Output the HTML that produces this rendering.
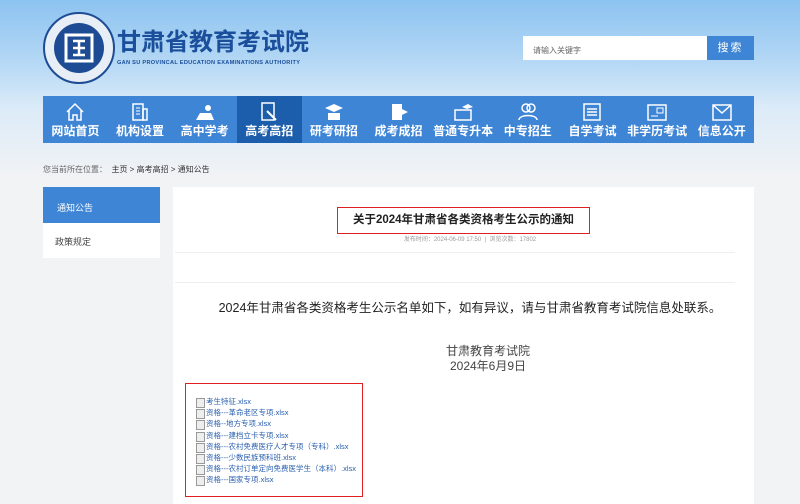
<!DOCTYPE html>
<html><head><meta charset="utf-8"><style>
*{margin:0;padding:0;box-sizing:border-box}
body{width:800px;height:504px;overflow:hidden;font-family:"Liberation Sans","Noto Sans CJK SC",sans-serif;background:#f2f3f5;position:relative}
.hdr{position:absolute;left:0;top:0;width:800px;height:180px;background:linear-gradient(180deg,#8cc3f0 0%,#b5d8f5 35%,#dcebf8 60%,#f2f3f5 100%)}
.abs{position:absolute}
.nav{left:43px;top:96px;width:711px;height:47px;background:#3f85d6;display:flex}
.nav div{flex:1;color:#fff;font-weight:bold;font-size:12px;text-align:center;padding-top:26px;position:relative}
.nav div.on{background:#1c5eab}
.nav svg{position:absolute;left:50%;top:5px;margin-left:-11px}
.side{left:43px;top:187px;width:117px;height:71px;background:#fff}
.content{left:173px;top:187px;width:581px;height:317px;background:#fff}
.files div{font-size:7.5px;color:#2a5fb0;height:11.2px;line-height:11.2px;padding-left:12px;position:relative}
.files div:before{content:"";position:absolute;left:2px;top:2px;width:7px;height:8px;border:1px solid #999;background:#eee}
</style></head><body>
<div class="hdr"></div>
<svg class="abs" style="left:43px;top:12px" width="72" height="72" viewBox="0 0 72 72">
<circle cx="36" cy="36" r="35" fill="#e8eef6" stroke="#1d4c95" stroke-width="2"/>
<circle cx="36" cy="36" r="25" fill="#1d4c95"/>
<rect x="23" y="23" width="26" height="26" fill="none" stroke="#fff" stroke-width="3"/>
<path d="M30 29h12M30 43h12M36 29v14M30 36h12" stroke="#fff" stroke-width="2.5" fill="none"/>
</svg>
<div class="abs" style="left:117px;top:29px;font-size:24px;font-weight:bold;color:#1b4f9c;line-height:28px">甘肃省教育考试院</div>
<div class="abs" style="left:117px;top:60px;font-size:5.6px;font-weight:bold;color:#1b4f9c;letter-spacing:0.3px">GAN SU PROVINCAL EDUCATION EXAMINATIONS AUTHORITY</div>
<div class="abs" style="left:523px;top:36px;width:184px;height:24px;background:#fff;font-size:8px;color:#666;padding:9px 0 0 10px">请输入关键字</div>
<div class="abs" style="left:707px;top:36px;width:47px;height:24px;background:#3f85d6;color:#fff;font-size:11px;text-align:center;line-height:24px;letter-spacing:2px">搜索</div>
<div class="abs nav">
<div><svg width="22" height="22"><path d="M3 11L11 3l8 8M5 9v10h4v-5h4v5h4V9" fill="none" stroke="#fff" stroke-width="1.5"/></svg>网站首页</div>
<div><svg width="22" height="22"><rect x="4" y="3" width="10" height="16" fill="none" stroke="#fff" stroke-width="1.5"/><rect x="14" y="8" width="4" height="11" fill="none" stroke="#fff" stroke-width="1.5"/><path d="M7 7h4M7 10h4M7 13h4" stroke="#fff"/></svg>机构设置</div>
<div><svg width="22" height="22"><path d="M2 19h18l-3-7H6z" fill="#fff"/><circle cx="14" cy="7" r="3" fill="#fff"/></svg>高中学考</div>
<div class="on"><svg width="22" height="22"><rect x="4" y="2" width="12" height="17" fill="none" stroke="#fff" stroke-width="1.5"/><path d="M9 10l9 9" stroke="#fff" stroke-width="2"/></svg>高考高招</div>
<div><svg width="22" height="22"><path d="M2 7l9-4 9 4-9 4z" fill="#fff"/><rect x="5" y="12" width="12" height="7" fill="#fff"/></svg>研考研招</div>
<div><svg width="22" height="22"><rect x="4" y="3" width="10" height="16" fill="#fff"/><path d="M14 8l6 3-6 3z" fill="#fff"/></svg>成考成招</div>
<div><svg width="22" height="22"><rect x="3" y="9" width="16" height="10" fill="none" stroke="#fff" stroke-width="1.5"/><path d="M10 6l6-3 5 3-6 2z" fill="#fff"/></svg>普通专升本</div>
<div><svg width="22" height="22"><circle cx="9" cy="7" r="4" fill="none" stroke="#fff" stroke-width="1.5"/><circle cx="14" cy="7" r="4" fill="none" stroke="#fff" stroke-width="1.5"/><path d="M2 19c0-6 18-6 18 0" fill="none" stroke="#fff" stroke-width="1.5"/></svg>中专招生</div>
<div><svg width="22" height="22"><rect x="3" y="3" width="16" height="16" fill="none" stroke="#fff" stroke-width="1.5"/><path d="M6 8h10M6 11h10M6 14h10" stroke="#fff" stroke-width="1.5"/></svg>自学考试</div>
<div><svg width="22" height="22"><rect x="2" y="4" width="18" height="15" fill="none" stroke="#fff" stroke-width="1.5"/><rect x="11" y="7" width="6" height="5" fill="none" stroke="#fff"/><path d="M5 15h7" stroke="#fff"/></svg>非学历考试</div>
<div><svg width="22" height="22"><rect x="2" y="4" width="18" height="15" fill="none" stroke="#fff" stroke-width="1.5"/><path d="M2 4l9 8 9-8" fill="none" stroke="#fff" stroke-width="1.5"/></svg>信息公开</div>
</div>
<div class="abs" style="left:43px;top:164px;font-size:8px;color:#666">您当前所在位置：&nbsp; <span style="color:#333">主页 &gt; 高考高招 &gt; 通知公告</span></div>
<div class="abs side">
<div style="height:36px;background:#3f85d6;color:#fff;font-size:9px;padding:14px 0 0 14px">通知公告</div>
<div style="font-size:9px;color:#444;padding:12px 0 0 12px">政策规定</div>
</div>
<div class="abs content"></div>
<div class="abs" style="left:337px;top:207px;width:253px;height:27px;border:1.5px solid #e02020;font-size:11.5px;font-weight:bold;color:#222;text-align:center;line-height:24px">关于2024年甘肃省各类资格考生公示的通知</div>
<div class="abs" style="left:300px;top:234px;width:340px;text-align:center;font-size:6px;color:#999">发布时间：2024-06-09 17:50 &nbsp;|&nbsp; 浏览次数：17802</div>
<div class="abs" style="left:175px;top:252px;width:560px;height:1px;background:#eee"></div>
<div class="abs" style="left:175px;top:282px;width:560px;height:1px;background:#eee"></div>
<div class="abs" style="left:180px;top:297px;width:580px;text-align:center;font-size:12.5px;color:#222">2024年甘肃省各类资格考生公示名单如下，如有异议，请与甘肃省教育考试院信息处联系。</div>
<div class="abs" style="left:398px;top:344px;width:180px;text-align:center;font-size:12px;color:#444;line-height:15px">甘肃教育考试院<br>2024年6月9日</div>
<div class="abs files" style="left:185px;top:383px;width:178px;height:114px;border:1.5px solid #e02020;padding:12px 0 0 8px">
<div>考生特征.xlsx</div><div>资格---革命老区专项.xlsx</div><div>资格--地方专项.xlsx</div><div>资格---建档立卡专项.xlsx</div><div>资格---农村免费医疗人才专项（专科）.xlsx</div><div>资格---少数民族预科班.xlsx</div><div>资格---农村订单定向免费医学生（本科）.xlsx</div><div>资格---国家专项.xlsx</div>
</div>
</body></html>
